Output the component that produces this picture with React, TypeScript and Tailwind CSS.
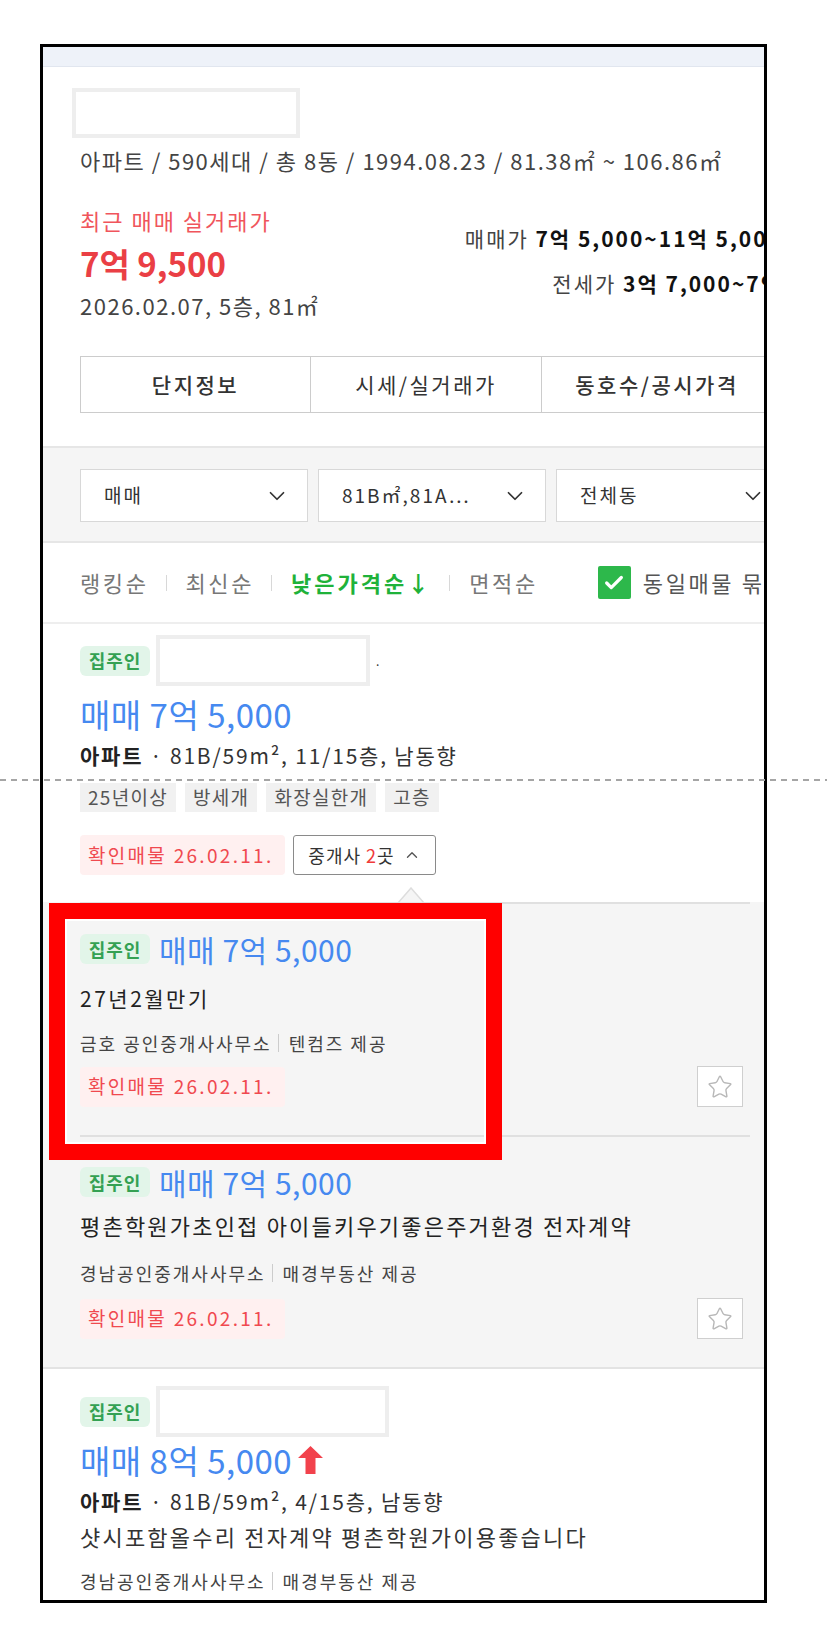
import { Check, ChevronDown, ChevronUp, Star } from 'lucide-react';

function OwnerTag() {
  return (
    <span className="inline-flex h-[30px] w-[70px] shrink-0 items-center justify-center rounded-[6px] bg-[#e2f5e9] text-[18px] font-bold tracking-[1px] text-[#34a153]">
      집주인
    </span>
  );
}

function ConfirmTag() {
  return (
    <span className="inline-flex h-[40px] w-[205px] items-center rounded-[4px] bg-[#fff0f0] pl-[8px] text-[19px] tracking-[2.3px] text-[#f0494f]">
      확인매물 26.02.11.
    </span>
  );
}

function Broker({ office, source }: { office: string; source: string }) {
  return (
    <div className="flex items-center text-[18px] leading-[24px] tracking-[2px] text-[#444]">
      <span>{office}</span>
      <span className="ml-[6px] mr-[10px] h-[18px] w-px bg-[#cccccc]" />
      <span>{source}</span>
    </div>
  );
}

function StarButton() {
  return (
    <button className="mr-[7px] flex h-[41px] w-[46px] items-center justify-center border border-[#cfcfcf] bg-white">
      <Star className="h-[26px] w-[26px] text-[#b8b8b8]" strokeWidth={1.3} />
    </button>
  );
}

function Redacted({ w }: { w: string }) {
  return <div className={`h-[51px] border-4 border-[#eeeeee] bg-white ${w}`} />;
}

const Sep = () => <span className="ml-[17px] mr-[19px] h-[16px] w-px bg-[#d8d8d8]" />;

export default function App() {
  return (
    <div className="relative h-[1641px] w-[827px] overflow-hidden bg-white font-['Noto_Sans_CJK_KR','Noto_Sans',sans-serif] text-[#222]">
      <div className="pl-[40px] pt-[44px]">
        <div className="h-[1559px] w-[727px] overflow-hidden border-[3px] border-black">
          <div className="w-[800px]">
            {/* top strip */}
            <div className="h-[20px] border-b border-[#e1e6ef] bg-[#eef2f9]" />

            {/* complex summary */}
            <div className="px-[37px]">
              <div className="-ml-[8px] mt-[21px] h-[50px] w-[228px] border-4 border-[#eeeeee] bg-white" />
              <div className="mt-[8px] whitespace-nowrap text-[22px] leading-[28px] tracking-[1.5px] text-[#444]">
                아파트 / 590세대 / 총 8동 / 1994.08.23 / 81.38㎡ ~ 106.86㎡
              </div>
              <div className="mt-[32px] flex justify-between">
                <div>
                  <div className="text-[22px] leading-[28px] tracking-[2px] text-[#f0555c]">최근 매매 실거래가</div>
                  <div className="mt-[9px] text-[33px] font-bold leading-[40px] text-[#ea3f45]">7억 9,500</div>
                  <div className="mt-[8px] text-[22px] leading-[28px] tracking-[1.5px] text-[#444]">2026.02.07, 5층, 81㎡</div>
                </div>
                <div className="whitespace-nowrap pr-[24px] pt-[18px] text-right text-[21px] leading-[28px] tracking-[2px] text-[#444]">
                  <div>
                    매매가 <b className="text-[#111]">7억 5,000~11억 5,000</b>
                  </div>
                  <div className="mt-[17px]">
                    전세가 <b className="text-[#111]">3억 7,000~7억</b>
                  </div>
                </div>
              </div>

              {/* tabs */}
              <div className="mt-[37px] flex text-[21px] tracking-[2.5px] text-[#333]">
                <div className="flex h-[57px] w-[231px] items-center justify-center border border-[#cccccc] font-medium">단지정보</div>
                <div className="flex h-[57px] w-[231px] items-center justify-center border-y border-r border-[#cccccc]">시세/실거래가</div>
                <div className="flex h-[57px] w-[231px] items-center justify-center border-y border-r border-[#cccccc] font-medium">동호수/공시가격</div>
              </div>
            </div>

            {/* filters */}
            <div className="mt-[33px] border-y-2 border-[#e6e6e6] bg-[#f5f5f5] px-[37px] pb-[19px] pt-[21px]">
              <div className="flex gap-[10px] text-[19px] tracking-[2px] text-[#333]">
                {['매매', '81B㎡,81A…', '전체동'].map((label) => (
                  <div key={label} className="flex h-[53px] w-[228px] shrink-0 items-center justify-between border border-[#d8d8d8] bg-white pl-[23px] pr-[17px]">
                    <span>{label}</span>
                    <ChevronDown className="h-[26px] w-[26px] text-[#333]" strokeWidth={1.6} />
                  </div>
                ))}
              </div>
            </div>

            {/* sort */}
            <div className="flex h-[81px] items-center border-b-2 border-[#eeeeee] px-[37px] text-[22px] tracking-[2.6px] text-[#777]">
              <span>랭킹순</span>
              <Sep />
              <span>최신순</span>
              <Sep />
              <span className="font-bold tracking-[3px] text-[#1fb23a]">낮은가격순↓</span>
              <Sep />
              <span>면적순</span>
              <span className="ml-[60px] flex h-[33px] w-[33px] shrink-0 items-center justify-center rounded-[2px] bg-[#2db84b]">
                <Check className="h-[22px] w-[22px] text-white" strokeWidth={3.5} />
              </span>
              <span className="ml-[12px] whitespace-nowrap text-[#555]">동일매물 묶기</span>
            </div>

            {/* listing 1 */}
            <div className="px-[37px] pt-[11px]">
              <div className="flex items-center gap-[6px]">
                <OwnerTag />
                <Redacted w="w-[214px]" />
                <span className="text-[12px] text-[#333]">.</span>
              </div>
              <div className="mt-[10px] text-[33px] leading-[36px] tracking-[0.5px] text-[#4689f0]">매매 7억 5,000</div>
              <div className="mt-[9px] whitespace-nowrap text-[21px] leading-[28px] tracking-[1.8px] text-[#333]">
                <b className="text-[#222]">아파트</b> · 81B/59m², 11/15층, 남동향
              </div>
              <div className="mt-[14px] flex gap-[9px] text-[19px] tracking-[1.3px] text-[#555]">
                {['25년이상', '방세개', '화장실한개', '고층'].map((t) => (
                  <span key={t} className="flex h-[29px] items-center bg-[#f1f1f1] px-[8px]">{t}</span>
                ))}
              </div>
              <div className="mt-[23px] flex gap-[8px]">
                <ConfirmTag />
                <button className="flex h-[40px] w-[143px] items-center justify-center gap-[8px] rounded-[3px] border border-[#8a8a8a] bg-white text-[18px] tracking-[1px] text-[#333]">
                  <span>
                    중개사 <span className="text-[#f03a3a]">2</span>곳
                  </span>
                  <ChevronUp className="h-[18px] w-[18px] text-[#555]" strokeWidth={1.8} />
                </button>
              </div>
            </div>

            {/* broker panel */}
            <div className="relative mt-[27px] border-b-2 border-[#e3e3e3] bg-[#f5f5f5]">
              <svg className="absolute left-[354px] top-[-15px]" width="28" height="17" viewBox="0 0 28 17">
                <polygon points="1,16 14,1 27,16" fill="#f5f5f5" stroke="#dddddd" strokeWidth="1.5" />
              </svg>
              <div className="ml-[37px] w-[670px] border-t-2 border-[#e0e0e0]">
                <div className="border-b-2 border-[#e0e0e0] pb-[28px] pt-[27px]">
                  <div className="flex h-[36px] items-center gap-[9px]">
                    <OwnerTag />
                    <span className="text-[30px] tracking-[0.5px] text-[#4689f0]">매매 7억 5,000</span>
                  </div>
                  <div className="mt-[17px] text-[21px] leading-[28px] tracking-[2.5px] text-[#222]">27년2월만기</div>
                  <div className="mt-[19px]">
                    <Broker office="금호 공인중개사사무소" source="텐컴즈 제공" />
                  </div>
                  <div className="mt-[11px] flex items-center justify-between">
                    <ConfirmTag />
                    <StarButton />
                  </div>
                </div>
                <div className="pb-[28px] pt-[27px]">
                  <div className="flex h-[36px] items-center gap-[9px]">
                    <OwnerTag />
                    <span className="text-[30px] tracking-[0.5px] text-[#4689f0]">매매 7억 5,000</span>
                  </div>
                  <div className="mt-[11px] whitespace-nowrap text-[22px] leading-[28px] tracking-[2.2px] text-[#222]">
                    평촌학원가초인접 아이들키우기좋은주거환경 전자계약
                  </div>
                  <div className="mt-[22px]">
                    <Broker office="경남공인중개사사무소" source="매경부동산 제공" />
                  </div>
                  <div className="mt-[13px] flex items-center justify-between">
                    <ConfirmTag />
                    <StarButton />
                  </div>
                </div>
              </div>
            </div>

            {/* listing 3 */}
            <div className="px-[37px] pt-[17px]">
              <div className="flex items-center gap-[6px]">
                <OwnerTag />
                <Redacted w="w-[233px]" />
              </div>
              <div className="mt-[5px] flex items-center gap-[6px]">
                <span className="text-[33px] leading-[36px] tracking-[0.5px] text-[#4689f0]">매매 8억 5,000</span>
                <svg width="25" height="28" viewBox="0 0 25 28">
                  <polygon points="12.5,0 25,12 17.5,12 17.5,28 7.5,28 7.5,12 0,12" fill="#f2424c" />
                </svg>
              </div>
              <div className="mt-[9px] whitespace-nowrap text-[21px] leading-[28px] tracking-[1.8px] text-[#333]">
                <b className="text-[#222]">아파트</b> · 81B/59m², 4/15층, 남동향
              </div>
              <div className="mt-[7px] whitespace-nowrap text-[22px] leading-[28px] tracking-[2.2px] text-[#333]">
                샷시포함올수리 전자계약 평촌학원가이용좋습니다
              </div>
              <div className="mt-[19px]">
                <Broker office="경남공인중개사사무소" source="매경부동산 제공" />
              </div>
            </div>
          </div>
        </div>
      </div>

      {/* annotation overlays */}
      <div className="absolute left-[49px] top-[903px] h-[257px] w-[453px] border-[16px] border-[#ff0000] shadow-[inset_0_0_0_2px_#ffffff]" />
      <div className="absolute left-0 top-[779px] h-[2px] w-full bg-[repeating-linear-gradient(90deg,#a5a5a5_0_6px,transparent_6px_11px)]" />
    </div>
  );
}
